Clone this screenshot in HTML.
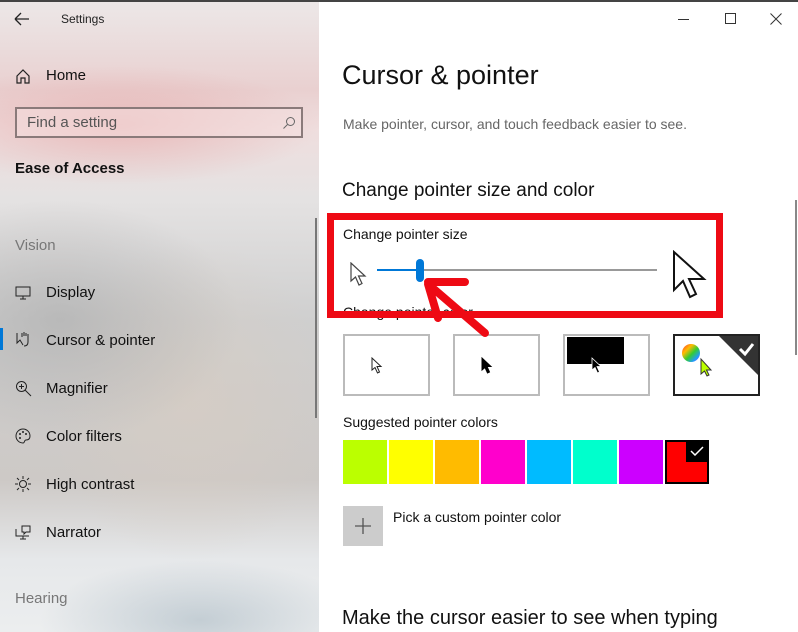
<!DOCTYPE html>
<html><head><meta charset="utf-8"><style>
*{margin:0;padding:0;box-sizing:border-box}
body{width:798px;height:632px;overflow:hidden;position:relative;font-family:"Liberation Sans",sans-serif;background:#fff;color:#000}
.side{position:absolute;left:0;top:0;width:319px;height:632px;
background:
radial-gradient(ellipse 200px 60px at 120px 125px,rgba(230,170,170,.7),transparent),
radial-gradient(ellipse 180px 120px at 60px 320px,rgba(170,170,170,.6),transparent),
radial-gradient(ellipse 140px 160px at 190px 400px,rgba(215,205,195,.7),transparent),
radial-gradient(ellipse 160px 60px at 200px 620px,rgba(170,185,195,.6),transparent),
linear-gradient(#ece8e8 0,#e9d0d0 90px,#efdede 130px,#e4e2e2 200px,#cfcfcf 320px,#cdc9c6 480px,#e6e8ea 560px,#eceeef 632px)}
.t{position:absolute;white-space:nowrap}
.topline{position:absolute;left:0;top:0;width:798px;height:2px;background:#444}
.nav{position:absolute;left:46px;font-size:15px;color:#111}
.ico{position:absolute;left:15px}
.sw{position:absolute;top:440px;width:44px;height:44px}
.box{position:absolute;top:334px;width:87px;height:62px;border:2px solid #bbb;background:#fff}
</style></head><body>
<div class="side">
<svg class="ico" style="left:14px;top:12px" width="16" height="14"><path d="M1 7H15M1 7L7 1M1 7L7 13" stroke="#222" stroke-width="1.3" fill="none"/></svg>
<div class="t" style="left:61px;top:12px;font-size:12px;color:#222">Settings</div>
<svg class="ico" style="top:68px" width="16" height="16"><path d="M2 8L8 2L14 8V15H10V10H6V15H2Z" stroke="#222" stroke-width="1.2" fill="none"/></svg>
<div class="nav" style="top:67px">Home</div>
<div style="position:absolute;left:15px;top:107px;width:288px;height:31px;border:2px solid #8a7a7a;background:rgba(245,225,225,.5)"></div>
<div class="t" style="left:27px;top:114px;font-size:15px;color:#555">Find a setting</div>
<svg style="position:absolute;left:282px;top:116px" width="14" height="14"><circle cx="8.5" cy="5.5" r="4" stroke="#666" fill="none"/><path d="M5.5 8.5L1.5 12.5" stroke="#666"/></svg>
<div class="t" style="left:15px;top:160px;font-size:15px;font-weight:bold;color:#111">Ease of Access</div>
<div class="t" style="left:15px;top:237px;font-size:15px;color:#777">Vision</div>
<svg class="ico" style="top:286px" width="16" height="14"><rect x="1" y="1" width="14" height="9" stroke="#222" fill="none"/><path d="M5 13H11M8 10V13" stroke="#222"/></svg>
<div class="nav" style="top:284px">Display</div>
<div style="position:absolute;left:0;top:328px;width:3px;height:22px;background:#0078d7"></div>
<svg class="ico" style="top:331px" width="18" height="16"><path d="M2 2L2 12L5 9L8 14M7 6V2M9 5V1M11 5V2M13 6V3V11Q13 15 9 15" stroke="#222" fill="none"/></svg>
<div class="nav" style="top:332px">Cursor &amp; pointer</div>
<svg class="ico" style="top:380px" width="18" height="18"><circle cx="6.5" cy="6.5" r="5" stroke="#222" fill="none"/><path d="M4 6.5H9M6.5 4V9M10 10L16 16" stroke="#222"/></svg>
<div class="nav" style="top:380px">Magnifier</div>
<svg class="ico" style="top:428px" width="16" height="16"><path d="M8 1A7 7 0 1 0 8 15C10 15 9 12 11 12C14 12 15 10 15 8A7 7 0 0 0 8 1Z" stroke="#222" fill="none"/><circle cx="5" cy="6" r="1" fill="#222"/><circle cx="8" cy="4" r="1" fill="#222"/><circle cx="11" cy="6" r="1" fill="#222"/><circle cx="5" cy="10" r="1" fill="#222"/></svg>
<div class="nav" style="top:428px">Color filters</div>
<svg class="ico" style="top:476px" width="16" height="16"><circle cx="8" cy="8" r="3.5" stroke="#222" fill="none"/><path d="M8 0V3M8 13V16M0 8H3M13 8H16M2 2L4 4M12 12L14 14M2 14L4 12M12 4L14 2" stroke="#222"/></svg>
<div class="nav" style="top:476px">High contrast</div>
<svg class="ico" style="top:524px" width="17" height="17"><path d="M1 5V12H14M8 12V15M5 15H11" stroke="#222" fill="none"/><path d="M7 2H15V8H11L9 10V8H7Z" stroke="#222" fill="none"/></svg>
<div class="nav" style="top:524px">Narrator</div>
<div class="t" style="left:15px;top:590px;font-size:15px;color:#777">Hearing</div>
<div style="position:absolute;left:315px;top:218px;width:2px;height:200px;background:#777"></div>
</div>
<div class="topline"></div>
<div style="position:absolute;left:678px;top:19px;width:11px;height:1px;background:#333"></div>
<div style="position:absolute;left:725px;top:13px;width:11px;height:11px;border:1px solid #333"></div>
<svg style="position:absolute;left:770px;top:13px" width="12" height="12"><path d="M0.5 0.5L11.5 11.5M11.5 0.5L0.5 11.5" stroke="#333"/></svg>
<div style="position:absolute;left:795px;top:200px;width:2px;height:155px;background:#888"></div>

<div class="t" style="left:342px;top:60px;font-size:27px;color:#111">Cursor &amp; pointer</div>
<div class="t" style="left:343px;top:116px;font-size:14px;color:#666">Make pointer, cursor, and touch feedback easier to see.</div>
<div class="t" style="left:342px;top:180px;font-size:19px;color:#111">Change pointer size and color</div>
<div class="t" style="left:343px;top:226px;font-size:14px;color:#111">Change pointer size</div>
<svg style="position:absolute;left:350px;top:262px" width="18" height="26"><path d="M1 1V19L5.5 15L9 23L12 21.5L8.5 14H15Z" fill="#fff" stroke="#444" stroke-width="1.2"/></svg>
<div style="position:absolute;left:377px;top:269px;width:280px;height:2px;background:#999"></div>
<div style="position:absolute;left:377px;top:269px;width:44px;height:2px;background:#0078d7"></div>
<div style="position:absolute;left:416px;top:259px;width:8px;height:23px;border-radius:4px;background:#0078d7"></div>
<svg style="position:absolute;left:672px;top:250px" width="36" height="50"><path d="M2 2V40L11 31L18 47L24 44L17 29H32Z" fill="#fff" stroke="#111" stroke-width="2"/></svg>
<div class="t" style="left:343px;top:304px;font-size:14px;color:#111">Change pointer color</div>

<div class="box" style="left:343px"><svg style="position:absolute;left:26px;top:21px" width="12" height="18"><path d="M1 1V13L4 10.5L6.5 16L8.5 15L6 9.5H10Z" fill="#fff" stroke="#222"/></svg></div>
<div class="box" style="left:453px"><svg style="position:absolute;left:26px;top:21px" width="12" height="18"><path d="M1 1V13L4 10.5L6.5 16L8.5 15L6 9.5H10Z" fill="#000" stroke="#000"/></svg></div>
<div class="box" style="left:563px"><div style="position:absolute;left:2px;top:1px;width:57px;height:27px;background:#000"></div><svg style="position:absolute;left:26px;top:21px" width="12" height="18"><path d="M1 1V13L4 10.5L6.5 16L8.5 15L6 9.5H10Z" fill="#000" stroke="#fff" stroke-width=".8"/></svg></div>
<div class="box" style="left:673px;border-color:#222;overflow:hidden"><svg style="position:absolute;left:0;top:0" width="84" height="58"><path d="M44 0H84V40Z" fill="#333"/><path d="M65 13L70 18L78 8" stroke="#fff" stroke-width="3" fill="none"/><circle cx="16" cy="17" r="9" fill="url(#rb)"/><defs><linearGradient id="rb" x1="0" y1="0" x2="1" y2="1"><stop offset="0" stop-color="#f33"/><stop offset=".3" stop-color="#fb0"/><stop offset=".55" stop-color="#3c3"/><stop offset=".8" stop-color="#29f"/><stop offset="1" stop-color="#a3f"/></linearGradient></defs><path d="M26 23V38L29.5 35L32 40L34 39L31.5 34H36Z" fill="#bf0" stroke="#333"/></svg></div>

<div class="t" style="left:343px;top:414px;font-size:14px;color:#111">Suggested pointer colors</div>
<div class="sw" style="left:343px;background:#bf0"></div>
<div class="sw" style="left:389px;background:#ff0"></div>
<div class="sw" style="left:435px;background:#fb0"></div>
<div class="sw" style="left:481px;background:#f0c"></div>
<div class="sw" style="left:527px;background:#0bf"></div>
<div class="sw" style="left:573px;background:#0fc"></div>
<div class="sw" style="left:619px;background:#c0f"></div>
<div class="sw" style="left:665px;background:#f00;border:2px solid #000"><div style="position:absolute;right:0;top:0;width:21px;height:20px;background:#000"></div><svg style="position:absolute;right:3px;top:4px" width="14" height="10"><path d="M1 5L5 9L13 1" stroke="#fff" stroke-width="1.5" fill="none"/></svg></div>

<div style="position:absolute;left:343px;top:506px;width:40px;height:40px;background:#ccc"></div>
<svg style="position:absolute;left:353px;top:516px" width="20" height="20"><path d="M10 2V18M2 10H18" stroke="#555" stroke-width="1.3"/></svg>
<div class="t" style="left:393px;top:509px;font-size:14px;color:#111">Pick a custom pointer color</div>
<div class="t" style="left:342px;top:607px;font-size:20px;color:#111">Make the cursor easier to see when typing</div>

<div style="position:absolute;left:327px;top:213px;width:396px;height:105px;border:7px solid #ee0a14"></div>
<svg style="position:absolute;left:0;top:0" width="798" height="632"><path d="M485 333L428 284M428 282H465M428 284L438 318" stroke="#ee0a14" stroke-width="8" stroke-linecap="round" fill="none"/></svg>
</body></html>
